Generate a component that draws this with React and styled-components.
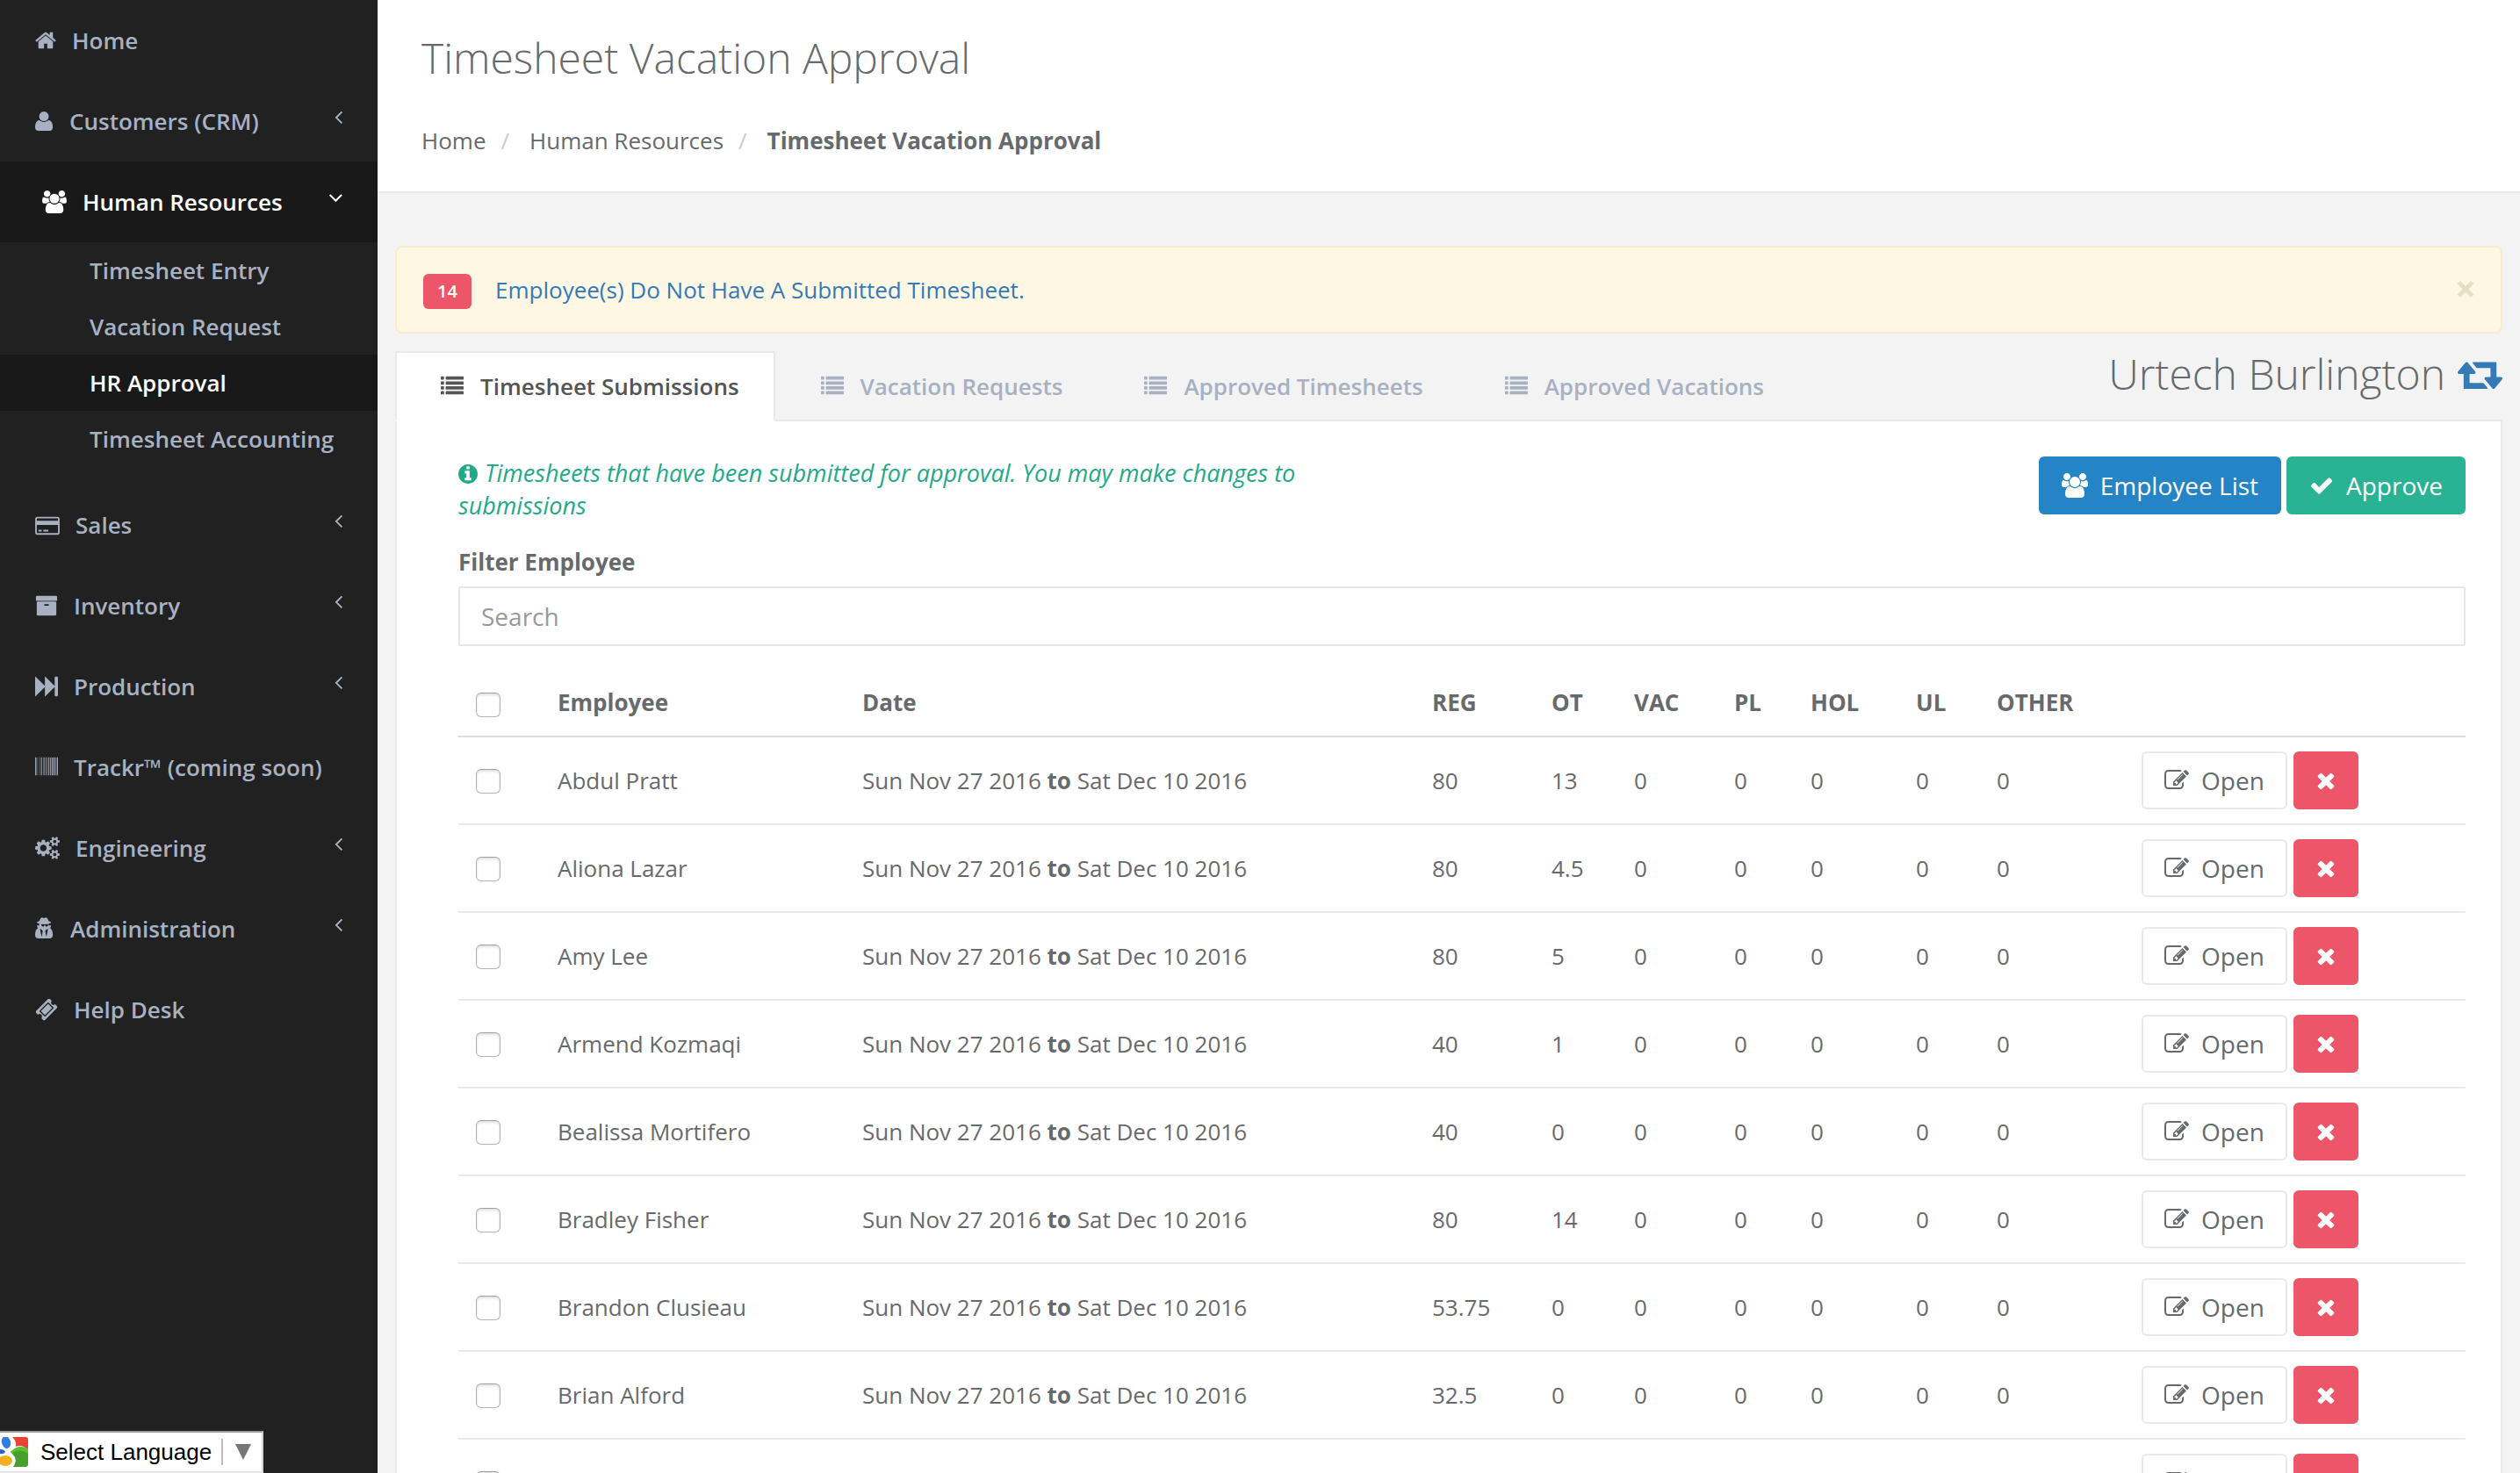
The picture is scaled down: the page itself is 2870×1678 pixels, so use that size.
import React, { useState } from "react";
import styled, { createGlobalStyle, css } from "styled-components";

const color = {
  text: "#676a6c",
  muted: "#a7b1c2",
  line: "#e7eaec",
  page: "#f3f3f3",
  nav: "#212121",
  navActive: "#191919",
  link: "#337ab7",
  primary: "#29b394",
  success: "#2584c6",
  danger: "#ed5568",
  info: "#23a98a",
};

const GlobalStyle = createGlobalStyle`
  *, *::before, *::after { box-sizing: border-box; }
  body {
    margin: 0;
    background: ${color.page};
    color: ${color.text};
    font-family: "Open Sans", "Noto Sans", sans-serif;
    font-size: 26px;
    line-height: 36px;
  }
  button, input, select { font: inherit; color: inherit; }
  a { color: inherit; text-decoration: none; }
`;

/* ---------- icons: [x origin, advance, path] on a 1792 em ---------- */

const icons = {
  home: [64, 1664, "M1472 992v480q0 26-19 45t-45 19h-384v-384h-256v384h-384q-26 0-45-19t-19-45v-480q0-1 .5-3t.5-3l575-474 575 474q1 2 1 6zm223-69l-62 74q-8 9-21 11h-3q-13 0-21-7l-692-577-692 577q-12 8-24 7-13-2-21-11l-62-74q-8-10-7-23.5t11-21.5l719-599q32-26 76-26t76 26l244 204v-195q0-14 9-23t23-9h192q14 0 23 9t9 23v408l219 182q10 8 11 21.5t-7 23.5z"],
  user: [192, 1472, "M1600 1405q0 120-73 189.5t-194 69.5h-874q-121 0-194-69.5t-73-189.5q0-53 3.5-103.5t14-109 26.5-108.5 43-97.5 62-81 85.5-53.5 111.5-20q9 0 42 21.5t74.5 48 108 48 133.5 21.5 133.5-21.5 108-48 74.5-48 42-21.5q61 0 111.5 20t85.5 53.5 62 81 43 97.5 26.5 108.5 14 109 3.5 103.5zm-320-893q0 159-112.5 271.5t-271.5 112.5-271.5-112.5-112.5-271.5 112.5-271.5 271.5-112.5 271.5 112.5 112.5 271.5z"],
  users: [0, 1920, "M593 896q-162 5-265 128h-134q-82 0-138-40.5t-56-118.5q0-353 124-353 6 0 43.5 21t97.5 42.5 119 21.5q67 0 133-23-5 37-5 66 0 139 81 256zm1071 637q0 120-73 189.5t-194 69.5h-874q-121 0-194-69.5t-73-189.5q0-53 3.5-103.5t14-109 26.5-108.5 43-97.5 62-81 85.5-53.5 111.5-20q10 0 43 21.5t73 48 107 48 135 21.5 135-21.5 107-48 73-48 43-21.5q61 0 111.5 20t85.5 53.5 62 81 43 97.5 26.5 108.5 14 109 3.5 103.5zm-1024-1277q0 106-75 181t-181 75-181-75-75-181 75-181 181-75 181 75 75 181zm704 384q0 159-112.5 271.5t-271.5 112.5-271.5-112.5-112.5-271.5 112.5-271.5 271.5-112.5 271.5 112.5 112.5 271.5zm576 225q0 78-56 118.5t-138 40.5h-134q-103-123-265-128 81-117 81-256 0-29-5-66 66 23 133 23 59 0 119-21.5t97.5-42.5 43.5-21q124 0 124 353zm-128-609q0 106-75 181t-181 75-181-75-75-181 75-181 181-75 181 75 75 181z"],
  card: [0, 1920, "M1760 256q66 0 113 47t47 113v1088q0 66-47 113t-113 47h-1600q-66 0-113-47t-47-113v-1088q0-66 47-113t113-47h1600zm-1600 128q-13 0-22.5 9.5t-9.5 22.5v160h1664v-160q0-13-9.5-22.5t-22.5-9.5h-1600zm1600 1152q13 0 22.5-9.5t9.5-22.5v-608h-1664v608q0 13 9.5 22.5t22.5 9.5h1600zm-1504-128v-128h256v128h-256zm384 0v-128h384v128h-384z"],
  archive: [0, 1792, "M1088 832q0-26-19-45t-45-19h-256q-26 0-45 19t-19 45 19 45 45 19h256q26 0 45-19t19-45zm576-192v960q0 26-19 45t-45 19h-1408q-26 0-45-19t-19-45v-960q0-26 19-45t45-19h1408q26 0 45 19t19 45zm64-448v256q0 26-19 45t-45 19h-1536q-26 0-45-19t-19-45v-256q0-26 19-45t45-19h1536q26 0 45 19t19 45z"],
  forward: [0, 1792, "M45 1651q-19 19-32 13t-13-32v-1472q0-26 13-32t32 13l710 710q8 8 13 19v-710q0-26 13-32t32 13l710 710q8 8 13 19v-678q0-26 19-45t45-19h128q26 0 45 19t19 45v1408q0 26-19 45t-45 19h-128q-26 0-45-19t-19-45v-678q-5 10-13 19l-710 710q-19 19-32 13t-13-32v-710q-5 10-13 19z"],
  barcode: [0, 1792, "M63 1536h-63v-1408h63v1408zm63-1h-32v-1407h32v1407zm94 0h-31v-1407h31v1407zm157 0h-31v-1407h31v1407zm157 0h-63v-1407h63v1407zm125 0h-31v-1407h31v1407zm63 0h-31v-1407h31v1407zm63 0h-31v-1407h31v1407zm157 0h-63v-1407h63v1407zm157 0h-63v-1407h63v1407zm126 0h-63v-1407h63v1407zm126 0h-63v-1407h63v1407zm94 0h-63v-1407h63v1407zm157 0h-94v-1407h94v1407zm94 0h-31v-1407h31v1407zm95 1h-63v-1408h63v1408z"],
  cogs: [0, 1920, "M896 896q0-106-75-181t-181-75-181 75-75 181 75 181 181 75 181-75 75-181zm768 512q0-52-38-90t-90-38-90 38-38 90q0 53 37.5 90.5t90.5 37.5 90.5-37.5 37.5-90.5zm0-1024q0-52-38-90t-90-38-90 38-38 90q0 53 37.5 90.5t90.5 37.5 90.5-37.5 37.5-90.5zm-384 421v185q0 10-7 19.5t-16 10.5l-155 24q-11 35-32 76 34 48 90 115 7 11 7 20 0 12-7 19-23 30-82.5 89.5t-78.5 59.5q-11 0-21-7l-115-90q-37 19-77 31-11 108-23 155-7 24-30 24h-186q-11 0-20-7.5t-10-17.5l-23-153q-34-10-75-31l-118 89q-7 7-20 7-11 0-21-8-144-133-144-160 0-9 7-19 10-14 41-53t47-61q-23-44-35-82l-152-24q-10-1-17-9.5t-7-19.5v-185q0-10 7-19.5t16-10.5l155-24q11-35 32-76-34-48-90-115-7-11-7-20 0-12 7-20 22-30 82-89t79-59q11 0 21 7l115 90q34-18 77-32 11-108 23-154 7-24 30-24h186q11 0 20 7.5t10 17.5l23 153q34 10 75 31l118-89q8-7 20-7 11 0 21 8 144 133 144 160 0 8-7 19-12 16-42 54t-45 60q23 48 34 82l152 23q10 2 17 10.5t7 19.5zm640 533v140q0 16-149 31-12 27-30 52 51 113 51 138 0 4-4 7-122 71-124 71-8 0-46-47t-52-68q-20 2-30 2t-30-2q-14 21-52 68t-46 47q-2 0-124-71-4-3-4-7 0-25 51-138-18-25-30-52-149-15-149-31v-140q0-16 149-31 13-29 30-52-51-113-51-138 0-4 4-7 4-2 35-20t59-34 30-16q8 0 46 46.5t52 67.5q20-2 30-2t30 2q51-71 92-112l6-2q4 0 124 70 4 3 4 7 0 25-51 138 17 23 30 52 149 15 149 31zm0-1024v140q0 16-149 31-12 27-30 52 51 113 51 138 0 4-4 7-122 71-124 71-8 0-46-47t-52-68q-20 2-30 2t-30-2q-14 21-52 68t-46 47q-2 0-124-71-4-3-4-7 0-25 51-138-18-25-30-52-149-15-149-31v-140q0-16 149-31 13-29 30-52-51-113-51-138 0-4 4-7 4-2 35-20t59-34 30-16q8 0 46 46.5t52 67.5q20-2 30-2t30 2q51-71 92-112l6-2q4 0 124 70 4 3 4 7 0 25-51 138 17 23 30 52 149 15 149 31z"],
  secret: [192, 1536, "M704 1536l96-448-96-128-128-64zm384 0l128-640-128 64-96 128zm160-988q-2-4-4-6-10-8-96-8-70 0-167 19-7 2-21 2t-21-2q-97-19-167-19-86 0-96 8-2 2-4 6 2 18 4 27 2 3 7.5 6.5t7.5 10.5q2 4 7.5 20.5t7 20.5 7.5 17 8.5 17 9 14 12 13.5 14 9.5 17.5 8 20.5 4 24.5 2q36 0 59-12.5t32.5-30 14.5-34.5 11.5-29.5 17.5-12.5h12q11 0 17.5 12.5t11.5 29.5 14.5 34.5 32.5 30 59 12.5q13 0 24.5-2t20.5-4 17.5-8 14-9.5 12-13.5 9-14 8.5-17 7.5-17 7-20.5 7.5-20.5q2-7 7.5-10.5t7.5-6.5q2-9 4-27zm352 857q0 121-73 190t-194 69h-874q-121 0-194-69t-73-190q0-61 4.5-118t19-125.5 37.5-123.5 63.5-103.5 93.5-74.5l-90-220h214q-22-64-22-128 0-12 2-32-194-40-194-96 0-57 210-99 17-62 51.5-134t70.5-114q32-37 76-37 30 0 84 31t84 31 84-31 84-31q44 0 76 37 36 42 70.5 114t51.5 134q210 42 210 99 0 56-194 96 7 81-20 160h214l-82 225q63 33 107.5 96.5t65.5 143.5 29 151.5 8 148.5z"],
  ticket: [0, 1792, "M1024 452l316 316-572 572-316-316zm-211 979l618-618q19-19 19-45t-19-45l-362-362q-18-18-45-18t-45 18l-618 618q-19 19-19 45t19 45l362 362q18 18 45 18t45-18zm889-637l-907 908q-37 37-90.5 37t-90.5-37l-126-126q56-56 56-136t-56-136-136-56-136 56l-125-126q-37-37-37-90.5t37-90.5l907-906q37-37 90.5-37t90.5 37l125 125q-56 56-56 136t56 136 136 56 136-56l126 125q37 37 37 90.5t-37 90.5z"],
  left: [565, 640, "M1203 544q0 13-10 23l-393 393 393 393q10 10 10 23t-10 23l-50 50q-10 10-23 10t-23-10l-466-466q-10-10-10-23t10-23l466-466q10-10 23-10t23 10l50 50q10 10 10 23z"],
  down: [320, 1100, "M1395 736q0 13-10 23l-466 466q-10 10-23 10t-23-10l-466-466q-10-10-10-23t10-23l50-50q10-10 23-10t23 10l393 393 393-393q10-10 23-10t23 10l50 50q10 10 10 23z"],
  list: [0, 1792, "M32 128h192q32 0 32 32v192q0 32-32 32h-192q-32 0-32-32v-192q0-32 32-32zM32 512h192q32 0 32 32v192q0 32-32 32h-192q-32 0-32-32v-192q0-32 32-32zM32 896h192q32 0 32 32v192q0 32-32 32h-192q-32 0-32-32v-192q0-32 32-32zM32 1280h192q32 0 32 32v192q0 32-32 32h-192q-32 0-32-32v-192q0-32 32-32zM416 128h1344q32 0 32 32v192q0 32-32 32h-1344q-32 0-32-32v-192q0-32 32-32zM416 512h1344q32 0 32 32v192q0 32-32 32h-1344q-32 0-32-32v-192q0-32 32-32zM416 896h1344q32 0 32 32v192q0 32-32 32h-1344q-32 0-32-32v-192q0-32 32-32zM416 1280h1344q32 0 32 32v192q0 32-32 32h-1344q-32 0-32-32v-192q0-32 32-32z"],
  info: [128, 1536, "M1152 1376v-160q0-14-9-23t-23-9h-96v-512q0-14-9-23t-23-9h-320q-14 0-23 9t-9 23v160q0 14 9 23t23 9h96v320h-96q-14 0-23 9t-9 23v160q0 14 9 23t23 9h448q14 0 23-9t9-23zm-128-896v-160q0-14-9-23t-23-9h-192q-14 0-23 9t-9 23v160q0 14 9 23t23 9h192q14 0 23-9t9-23zm640 416q0 209-103 385.5t-279.5 279.5-385.5 103-385.5-103-279.5-279.5-103-385.5 103-385.5 279.5-279.5 385.5-103 385.5 103 279.5 279.5 103 385.5z"],
  check: [0, 1792, "M1671 566q0 40-28 68l-724 724-136 136q-28 28-68 28t-68-28l-136-136-362-362q-28-28-28-68t28-68l136-136q28-28 68-28t68 28l294 295 656-657q28-28 68-28t68 28l136 136q28 28 28 68z"],
  times: [192, 1408, "M1490 1322q0 40-28 68l-136 136q-28 28-68 28t-68-28l-294-294-294 294q-28 28-68 28t-68-28l-136-136q-28-28-28-68t28-68l294-294-294-294q-28-28-28-68t28-68l136-136q28-28 68-28t68 28l294 294 294-294q28-28 68-28t68 28l136 136q28 28 28 68t-28 68l-294 294 294 294q28 28 28 68z"],
  edit: [0, 1792, "M888 1184l116-116-152-152-116 116v56h96v96h56zm440-720q-16-16-33 1l-350 350q-17 17-1 33t33-1l350-350q17-17 1-33zm80 594v190q0 119-84.5 203.5t-203.5 84.5h-832q-119 0-203.5-84.5t-84.5-203.5v-832q0-119 84.5-203.5t203.5-84.5h832q63 0 117 25 15 7 18 23 3 17-9 29l-49 49q-14 14-32 8-23-6-45-6h-832q-66 0-113 47t-47 113v832q0 66 47 113t113 47h832q66 0 113-47t47-113v-126q0-13 9-22l64-64q15-15 35-7t20 29zm-96-738l288 288-672 672h-288v-288zm444 132l-92 92-288-288 92-92q28-28 68-28t68 28l152 152q28 28 28 68t-28 68z"],
  retweet: [0, 1920, "M1280 1504q0 13-9.5 22.5t-22.5 9.5h-960q-8 0-13.5-2t-9-7-5.5-8-3-11.5-1-11.5v-600h-192q-26 0-45-19t-19-45q0-24 15-41l320-384q19-22 49-22t49 22l320 384q15 17 15 41 0 26-19 45t-45 19h-192v384h576q16 0 25 11l160 192q7 10 7 21zm640-416q0 24-15 41l-320 384q-20 23-49 23t-49-23l-320-384q-15-17-15-41 0-26 19-45t45-19h192v-384h-576q-16 0-25-12l-160-192q-7-9-7-20 0-13 9.5-22.5t22.5-9.5h960q8 0 13.5 2t9 7 5.5 8 3 11.5 1 11.5v600h192q26 0 45 19t19 45z"],
};

const Glyph = styled.svg`
  flex: none;
  fill: currentColor;
  overflow: visible;
`;

function Icon({ name, size = 26, className }) {
  const [x, advance, d] = icons[name];
  return (
    <Glyph
      className={className}
      aria-hidden="true"
      width={Math.round((advance * size) / 1792)}
      height={size}
      viewBox={`${x} 0 ${advance} 1792`}
    >
      <path d={d} />
    </Glyph>
  );
}

/* ---------- shell ---------- */

const Shell = styled.div`
  display: grid;
  grid-template-columns: 430px minmax(0, 1fr);
  height: 100vh;
  overflow: hidden;
`;

const Sidebar = styled.nav`
  background: ${color.nav};
  overflow: hidden;
  font-weight: 600;
`;

const Menu = styled.ul`
  list-style: none;
  margin: 0;
  padding: 0;
`;

const NavLink = styled.a`
  display: flex;
  align-items: center;
  gap: 18px;
  padding: 28px 40px;
  color: ${color.muted};
  ${(p) =>
    p.$active &&
    css`
      padding-left: 48px;
      background: ${color.navActive};
      color: #fff;
    `}
`;

const Arrow = styled(Icon)`
  margin: 0 0 10px auto;
`;

const SubMenu = styled(Menu)`
  padding-bottom: 20px;
`;

const SubLink = styled.a`
  display: block;
  padding: 14px 20px 14px 102px;
  white-space: nowrap;
  color: ${(p) => (p.$active ? "#fff" : color.muted)};
  background: ${(p) => (p.$active ? color.navActive : "transparent")};
`;

const Main = styled.main`
  display: flex;
  flex-direction: column;
  overflow: hidden;
`;

/* ---------- heading ---------- */

const Heading = styled.header`
  padding: 40px 50px;
  background: #fff;
  border-bottom: 2px solid ${color.line};
`;

const Title = styled.h1`
  margin: 0;
  font-size: 48px;
  line-height: 52px;
  font-weight: 300;
`;

const Crumbs = styled.ol`
  display: flex;
  list-style: none;
  margin: 50px 0 0;
  padding: 0;
`;

const Crumb = styled.li`
  font-weight: ${(p) => (p.$current ? 700 : 400)};
  &:not(:first-child)::before {
    content: "/";
    padding: 0 23px 0 17px;
    font-weight: 400;
    color: #ccc;
  }
`;

/* ---------- content ---------- */

const Content = styled.div`
  flex: 1;
  padding: 60px 20px 0;
`;

const Alert = styled.div`
  display: flex;
  align-items: flex-start;
  gap: 27px;
  padding: 30px 28px 26px 30px;
  background: #fdf7e4;
  border: 2px solid #fbebcd;
  border-radius: 8px;
  color: ${color.link};
`;

const Badge = styled.span`
  min-width: 55px;
  padding: 2px 16px;
  border-radius: 6px;
  background: ${color.danger};
  color: #fff;
  font-size: 20px;
  font-weight: 600;
`;

const Close = styled.button`
  margin-left: auto;
  padding: 0;
  border: 0;
  background: none;
  color: #e7dcc4;
  font-size: 42px;
  line-height: 32px;
  font-weight: 700;
`;

const TabBar = styled.div`
  display: flex;
  justify-content: space-between;
  align-items: flex-start;
  margin-top: 20px;
  border-bottom: 2px solid ${color.line};
`;

const Tabs = styled.div`
  display: flex;
  margin-bottom: -2px;
`;

const Tab = styled.button`
  display: flex;
  align-items: center;
  gap: 19px;
  padding: 20px 39px 20px 50px;
  border: 2px solid transparent;
  background: none;
  color: ${color.muted};
  font-weight: 600;
  ${(p) =>
    p.$active &&
    css`
      background: #fff;
      border-color: ${color.line} ${color.line} #fff;
      color: #555;
    `}
`;

const Location = styled.h2`
  display: flex;
  align-items: center;
  gap: 14px;
  margin: 0;
  font-size: 48px;
  line-height: 52px;
  font-weight: 300;
`;

const SwitchLink = styled.a`
  display: flex;
  color: ${color.link};
`;

const Panel = styled.section`
  min-height: 100%;
  padding: 40px 40px 40px 70px;
  background: #fff;
  border: 2px solid ${color.line};
  border-top: 0;
`;

const Toolbar = styled.div`
  display: flex;
  justify-content: space-between;
  align-items: flex-start;
`;

const Hint = styled.p`
  flex: 0 0 45%;
  margin: 0;
  font-size: 27px;
  line-height: 37px;
  font-style: italic;
  color: ${color.info};
`;

const HintIcon = styled(Icon)`
  margin-right: 8px;
  vertical-align: -4px;
`;

const Actions = styled.div`
  display: flex;
  gap: ${(p) => (p.$wide ? 7 : 6)}px;
`;

const Button = styled.button`
  display: flex;
  align-items: center;
  gap: 14px;
  padding: 12px 24px;
  border: 2px solid ${(p) => p.$border || p.$fill};
  border-radius: 6px;
  background: ${(p) => p.$fill};
  color: ${(p) => (p.$border ? color.text : "#fff")};
  font-size: 28px;
  line-height: 38px;
  white-space: nowrap;
`;

const Label = styled.label`
  display: block;
  margin: 28px 0 10px;
  font-weight: 700;
`;

const Search = styled.input`
  display: block;
  width: 100%;
  padding: 12px 24px;
  border: 2px solid #e5e6e7;
  border-radius: 2px;
  background: #fff;
  font-size: 28px;
  line-height: 40px;
  height: 68px;
  &::placeholder {
    color: #999;
    opacity: 1;
  }
`;

const Table = styled.table`
  width: 100%;
  margin-top: 30px;
  table-layout: fixed;
  border-collapse: separate;
  border-spacing: 0;
`;

const Col = styled.col`
  width: ${(p) => p.$w}px;
`;

const Th = styled.th`
  padding: 16px 16px 20px;
  border-bottom: 2px solid #ddd;
  text-align: left;
  font-weight: 700;
`;

const Td = styled.td`
  padding: 16px;
  border-bottom: 2px solid ${color.line};
  white-space: nowrap;
`;

const Check = styled.input.attrs({ type: "checkbox" })`
  appearance: none;
  display: block;
  width: 28px;
  height: 28px;
  margin: 2px 4px 0;
  border: 1px solid #b4b4b4;
  border-top-color: #9f9f9f;
  border-radius: 6px;
  background: #fff;
  box-shadow: inset 0 2px 3px rgba(0, 0, 0, 0.12);
  th > & {
    margin-top: 6px;
  }
`;

/* ---------- language picker ---------- */

const Language = styled.label`
  position: fixed;
  left: 0;
  bottom: 0;
  display: flex;
  align-items: center;
  height: 48px;
  padding-right: 12px;
  border: solid;
  border-width: 2px 2px 2px 0;
  border-color: #9b9b9b #d5d5d5 #e6e6e6;
  background: #fff;
  color: #000;
  font-family: "Liberation Sans", Arial, sans-serif;
`;

const LanguageSelect = styled.select`
  appearance: none;
  margin: 0 10px 0 14px;
  padding: 0;
  border: 0;
  background: none;
  font-size: 26px;
  line-height: 32px;
`;

const Caret = styled.span`
  padding-left: 14px;
  border-left: 2px solid #bbb;
  display: flex;
  align-items: center;
  height: 30px;
`;

function TranslateMark() {
  return (
    <svg width="32" height="34" viewBox="0 0 32 34" aria-hidden="true">
      <path d="M14 0H29Q32 0 32 3V14Q24 8 18 11Q19 5 14 0Z" fill="#ea4335" />
      <path d="M32 13V31Q32 34 29 34H15Q19 29 17 23Q14 19 12 17Q20 8 32 13Z" fill="#47a02c" />
      <path d="M12 17Q20 8 32 13V19Q22 12 14 19Z" fill="#5fc02c" />
      <ellipse cx="7" cy="6" rx="5" ry="7" transform="rotate(-15 7 6)" fill="#2f7de0" />
      <path d="M0 14Q5 14 6 17Q4 20 0 19Z" fill="#2a63c8" />
      <ellipse cx="6" cy="27" rx="8" ry="6" fill="#f2b01e" />
    </svg>
  );
}

/* ---------- data ---------- */

const hrLinks = ["Timesheet Entry", "Vacation Request", "HR Approval", "Timesheet Accounting"];

const nav = [
  { icon: "home", text: "Home" },
  { icon: "user", text: "Customers (CRM)", more: true },
  { icon: "users", text: "Human Resources", links: hrLinks },
  { icon: "card", text: "Sales", more: true },
  { icon: "archive", text: "Inventory", more: true },
  { icon: "forward", text: "Production", more: true },
  { icon: "barcode", text: "Trackr™ (coming soon)" },
  { icon: "cogs", text: "Engineering", more: true },
  { icon: "secret", text: "Administration", more: true },
  { icon: "ticket", text: "Help Desk" },
];

const tabs = ["Timesheet Submissions", "Vacation Requests", "Approved Timesheets", "Approved Vacations"];

const columns = ["Employee", "Date", "REG", "OT", "VAC", "PL", "HOL", "UL", "OTHER"];
const widths = [97, 347, 649, 136, 94, 114, 87, 120, 92, 165, 385];

const employees = [
  ["Abdul Pratt", 80, 13],
  ["Aliona Lazar", 80, 4.5],
  ["Amy Lee", 80, 5],
  ["Armend Kozmaqi", 40, 1],
  ["Bealissa Mortifero", 40, 0],
  ["Bradley Fisher", 80, 14],
  ["Brandon Clusieau", 53.75, 0],
  ["Brian Alford", 32.5, 0],
  ["Bruce Allen", 40, 0],
];

function NavItem({ item }) {
  return (
    <li>
      <NavLink href="#" $active={!!item.links}>
        <Icon name={item.icon} />
        {item.text}
        {item.more && <Arrow name="left" />}
        {item.links && <Arrow name="down" />}
      </NavLink>
      {item.links && (
        <SubMenu>
          {item.links.map((text) => (
            <li key={text}>
              <SubLink href="#" $active={text === "HR Approval"}>{text}</SubLink>
            </li>
          ))}
        </SubMenu>
      )}
    </li>
  );
}

function EmployeeRow({ name, reg, ot }) {
  return (
    <tr>
      <Td><Check aria-label={`Select ${name}`} /></Td>
      <Td>{name}</Td>
      <Td>Sun Nov 27 2016 <b>to</b> Sat Dec 10 2016</Td>
      <Td>{reg}</Td>
      <Td>{ot}</Td>
      <Td>0</Td>
      <Td>0</Td>
      <Td>0</Td>
      <Td>0</Td>
      <Td>0</Td>
      <Td>
        <Actions $wide>
          <Button $fill="#fff" $border={color.line}><Icon name="edit" size={28} />Open</Button>
          <Button $fill={color.danger} aria-label={`Reject ${name}`}><Icon name="times" size={28} /></Button>
        </Actions>
      </Td>
    </tr>
  );
}

export default function App() {
  const [tab, setTab] = useState(tabs[0]);
  const [query, setQuery] = useState("");
  const shown = employees.filter(([name]) => name.toLowerCase().includes(query.toLowerCase()));

  return (
    <>
      <GlobalStyle />
      <Shell>
        <Sidebar>
          <Menu>
            {nav.map((item) => <NavItem key={item.text} item={item} />)}
          </Menu>
        </Sidebar>
        <Main>
          <Heading>
            <Title>Timesheet Vacation Approval</Title>
            <Crumbs>
              <Crumb><a href="#">Home</a></Crumb>
              <Crumb><a href="#">Human Resources</a></Crumb>
              <Crumb $current>Timesheet Vacation Approval</Crumb>
            </Crumbs>
          </Heading>
          <Content>
            <Alert>
              <Badge>14</Badge>
              <a href="#">Employee(s) Do Not Have A Submitted Timesheet.</a>
              <Close aria-label="Close">×</Close>
            </Alert>
            <TabBar>
              <Tabs role="tablist">
                {tabs.map((text) => (
                  <Tab key={text} role="tab" aria-selected={text === tab} $active={text === tab} onClick={() => setTab(text)}>
                    <Icon name="list" />
                    {text}
                  </Tab>
                ))}
              </Tabs>
              <Location>
                Urtech Burlington
                <SwitchLink href="#" aria-label="Switch location"><Icon name="retweet" size={48} /></SwitchLink>
              </Location>
            </TabBar>
            <Panel>
              <Toolbar>
                <Hint>
                  <HintIcon name="info" />
                  Timesheets that have been submitted for approval. You may make changes to submissions
                </Hint>
                <Actions>
                  <Button $fill={color.success}><Icon name="users" size={28} />Employee List</Button>
                  <Button $fill={color.primary}><Icon name="check" size={28} />Approve</Button>
                </Actions>
              </Toolbar>
              <Label htmlFor="filter">Filter Employee</Label>
              <Search id="filter" placeholder="Search" value={query} onChange={(e) => setQuery(e.target.value)} />
              <Table>
                <colgroup>
                  {widths.map((w, i) => <Col key={i} $w={w} />)}
                </colgroup>
                <thead>
                  <tr>
                    <Th><Check aria-label="Select all" /></Th>
                    {columns.map((text) => <Th key={text}>{text}</Th>)}
                    <Th />
                  </tr>
                </thead>
                <tbody>
                  {shown.map(([name, reg, ot]) => <EmployeeRow key={name} name={name} reg={reg} ot={ot} />)}
                </tbody>
              </Table>
            </Panel>
          </Content>
        </Main>
      </Shell>
      <Language>
        <TranslateMark />
        <LanguageSelect aria-label="Select Language">
          <option>Select Language</option>
        </LanguageSelect>
        <Caret aria-hidden="true">
          <svg width="18" height="18" viewBox="0 0 18 18"><path d="M0 0H18L9 18Z" fill="#767676" /></svg>
        </Caret>
      </Language>
    </>
  );
}
